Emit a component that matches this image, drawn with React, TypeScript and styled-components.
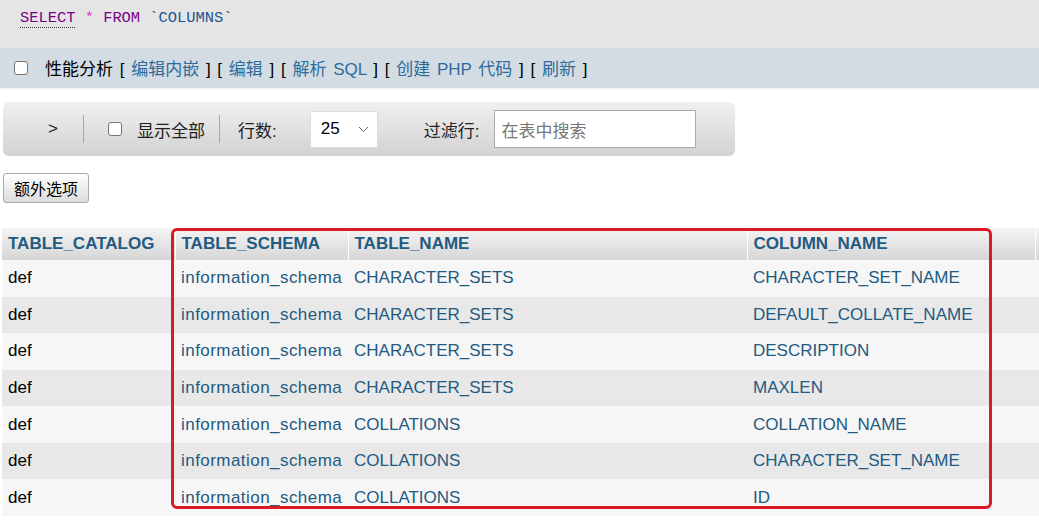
import styled, { createGlobalStyle } from "styled-components";

const GlobalStyle = createGlobalStyle`
  html, body {
    margin: 0;
    padding: 0;
    background: #fff;
    overflow: hidden;
  }
  body {
    font-family: "Liberation Sans", "Noto Sans CJK SC", sans-serif;
    font-size: 17px;
    color: #000;
  }
`;

const Page = styled.div`
  width: 1039px;
  height: 523px;
  overflow: hidden;
`;

const SqlBox = styled.div`
  height: 48px;
  box-sizing: border-box;
  background: #e5e5e5;
  display: flex;
  align-items: flex-start;
  padding: 9px 0 0 20px;
  font-family: "Liberation Mono", monospace;
  font-size: 15.4px;
`;

const Tok = styled.span<{ $kind: "kw" | "op" | "name" }>`
  color: ${(p) =>
    p.$kind === "kw" ? "#770088" : p.$kind === "op" ? "#d633c8" : "#1d5592"};
  white-space: pre;
`;

const Underlined = styled(Tok)`
  border-bottom: 1px dotted #333;
`;

const ActionBar = styled.div`
  height: 40px;
  background: #d3dce3;
  display: flex;
  align-items: center;
  padding-left: 14px;
  box-shadow: 0 1px 2px rgba(0, 0, 0, 0.08);
  white-space: pre;
`;

const Checkbox = styled.span<{ $gap?: number }>`
  display: inline-block;
  width: 14px;
  height: 14px;
  box-sizing: border-box;
  border: 1px solid #767676;
  border-radius: 3px;
  background: #fff;
  margin-left: ${(p) => p.$gap ?? 0}px;
  flex: none;
`;

const BarLabel = styled.span`
  margin: -2px 0 0 17px;
  word-spacing: 2px;
`;

const BarLink = styled.span`
  color: #2f6b9a;
`;

const NavBar = styled.div`
  margin: 14px 0 0 3px;
  width: 732px;
  height: 54px;
  border-radius: 6px;
  background: linear-gradient(#f0f0f0, #d2d2d2);
  display: flex;
  align-items: center;
  white-space: pre;
`;

const NavItem = styled.span<{ $gap: number }>`
  margin-left: ${(p) => p.$gap}px;
  color: #222;
`;

const Sep = styled.span<{ $gap: number }>`
  margin-left: ${(p) => p.$gap}px;
  width: 1px;
  height: 28px;
  background: #a8a8a8;
`;

const SelectBox = styled.div<{ $gap: number }>`
  margin-left: ${(p) => p.$gap}px;
  width: 68px;
  height: 37px;
  box-sizing: border-box;
  background: #fff;
  border: 1px solid #ddd;
  border-radius: 2px;
  display: flex;
  align-items: center;
  justify-content: space-between;
  padding: 0 8px 0 10px;
`;

const SearchInput = styled.div<{ $gap: number }>`
  margin-left: ${(p) => p.$gap}px;
  width: 202px;
  height: 38px;
  box-sizing: border-box;
  background: #fff;
  border: 1px solid #aaa;
  display: flex;
  align-items: center;
  padding-left: 6px;
  color: #777;
`;

const Button = styled.div`
  margin: 17px 0 0 3px;
  width: 86px;
  height: 30px;
  box-sizing: border-box;
  border: 1px solid #aaa;
  border-radius: 3px;
  background: linear-gradient(#fff, #dcdcdc);
  display: flex;
  align-items: center;
  justify-content: center;
  font-size: 16px;
`;

const TableWrap = styled.div`
  position: relative;
  margin: 25px 0 0 2px;
`;

const Grid = styled.table`
  border-collapse: collapse;
  table-layout: fixed;
  width: 1233px;
`;

const Head = styled.th`
  height: 32px;
  padding: 0 6px;
  text-align: left;
  font-weight: bold;
  color: #235a81;
  background: linear-gradient(#f4f4f4, #d6d6d6);
  border-right: 1px solid #fff;
  white-space: nowrap;
`;

const Row = styled.tr`
  height: 36.57px;
  background: #f6f6f6;
  &:nth-child(even) {
    background: #e8e8e8;
  }
`;

const Cell = styled.td<{ $link?: boolean }>`
  padding: 0 6px;
  color: ${(p) => (p.$link ? "#235a81" : "#000")};
  white-space: nowrap;
  overflow: hidden;
`;

const SchemaCell = styled(Cell)`
  letter-spacing: 0.45px;
`;

const Highlight = styled.div`
  position: absolute;
  left: 169px;
  top: 0;
  width: 821px;
  height: 281px;
  box-sizing: border-box;
  border: 3px solid #dc1a22;
  border-radius: 6px;
  pointer-events: none;
`;

const Chevron = () => (
  <svg width="11" height="7" viewBox="0 0 11 7">
    <path d="M1 1l4.5 4.5L10 1" fill="none" stroke="#666" strokeWidth="1" />
  </svg>
);

const rows: [string, string][] = [
  ["CHARACTER_SETS", "CHARACTER_SET_NAME"],
  ["CHARACTER_SETS", "DEFAULT_COLLATE_NAME"],
  ["CHARACTER_SETS", "DESCRIPTION"],
  ["CHARACTER_SETS", "MAXLEN"],
  ["COLLATIONS", "COLLATION_NAME"],
  ["COLLATIONS", "CHARACTER_SET_NAME"],
  ["COLLATIONS", "ID"],
];

export default function App() {
  return (
    <Page>
      <GlobalStyle />
      <SqlBox>
        <Underlined $kind="kw">SELECT</Underlined>
        <Tok $kind="op"> * </Tok>
        <Tok $kind="kw">FROM </Tok>
        <Tok $kind="name">`COLUMNS`</Tok>
      </SqlBox>
      <ActionBar>
        <Checkbox />
        <BarLabel>
          性能分析 [ <BarLink>编辑内嵌</BarLink> ] [ <BarLink>编辑</BarLink> ] [{" "}
          <BarLink>解析 SQL</BarLink> ] [ <BarLink>创建 PHP 代码</BarLink> ] [{" "}
          <BarLink>刷新</BarLink> ]
        </BarLabel>
      </ActionBar>
      <NavBar>
        <NavItem $gap={45}>&gt;</NavItem>
        <Sep $gap={25} />
        <Checkbox $gap={24} />
        <NavItem $gap={15}>显示全部</NavItem>
        <Sep $gap={14} />
        <NavItem $gap={18}>行数:</NavItem>
        <SelectBox $gap={33}>
          <span>25</span>
          <Chevron />
        </SelectBox>
        <NavItem $gap={46}>过滤行:</NavItem>
        <SearchInput $gap={15}>在表中搜索</SearchInput>
      </NavBar>
      <Button>额外选项</Button>
      <TableWrap>
        <Grid>
          <colgroup>
            <col style={{ width: 173 }} />
            <col style={{ width: 173 }} />
            <col style={{ width: 399 }} />
            <col style={{ width: 288 }} />
            <col style={{ width: 200 }} />
          </colgroup>
          <thead>
            <tr>
              <Head>TABLE_CATALOG</Head>
              <Head>TABLE_SCHEMA</Head>
              <Head>TABLE_NAME</Head>
              <Head>COLUMN_NAME</Head>
              <Head />
            </tr>
          </thead>
          <tbody>
            {rows.map(([table, column], i) => (
              <Row key={i}>
                <Cell>def</Cell>
                <SchemaCell $link>information_schema</SchemaCell>
                <Cell $link>{table}</Cell>
                <Cell $link>{column}</Cell>
                <Cell />
              </Row>
            ))}
          </tbody>
        </Grid>
        <Highlight />
      </TableWrap>
    </Page>
  );
}
